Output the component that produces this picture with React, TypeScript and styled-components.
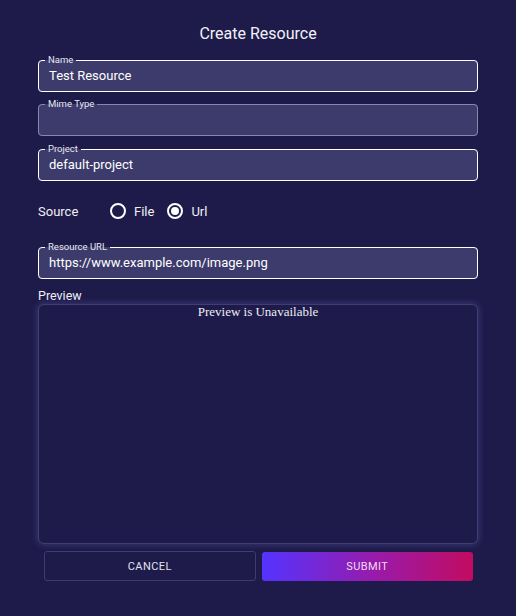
import React, { useState } from "react";
import styled, { createGlobalStyle } from "styled-components";

const Global = createGlobalStyle`
  html, body { margin: 0; padding: 0; background: #1e1b4a; }
  body { font-family: Roboto, "Liberation Sans", sans-serif; color: #fff; }
  * { box-sizing: border-box; }
`;

const Page = styled.div`
  width: 516px;
  height: 616px;
  background: #1e1b4a;
  padding: 0 38px;
  display: flex;
  flex-direction: column;
`;

const Title = styled.h1`
  margin: 0;
  padding-top: 24px;
  height: 55px;
  text-align: center;
  font-size: 16px;
  font-weight: 400;
  line-height: 19px;
  color: #f2f2f6;
`;

const Field = styled.fieldset<{ $active?: boolean; $mt?: number }>`
  margin: ${(p) => p.$mt ?? 0}px 0 0 0;
  padding: 0 10px 0 6px;
  border: 1px solid ${(p) => (p.$active ? "#ffffff" : "#8a87ad")};
  border-radius: 4px;
  background: #3d3b6c;
  min-width: 0;
`;

const Legend = styled.legend`
  padding: 0 3px;
  font-size: 9.5px;
  line-height: 10px;
  color: #e8e8f0;
`;

const Input = styled.input`
  display: block;
  width: 100%;
  height: 26px;
  padding: 0 0 6px 4px;
  margin: 0;
  border: none;
  outline: none;
  background: transparent;
  color: #ffffff;
  font-family: Roboto, "Liberation Sans", sans-serif;
  font-size: 13px;
`;

const SourceRow = styled.div`
  display: flex;
  align-items: center;
  height: 24px;
  margin-top: 18px;
  font-size: 13px;
  color: #f0f0f5;
`;

const SourceLabel = styled.span`
  width: 72px;
`;

const RadioOption = styled.label`
  display: flex;
  align-items: center;
  gap: 8px;
  margin-right: 13px;
  cursor: pointer;
`;

const RadioCircle = styled.span<{ $checked?: boolean }>`
  width: 16px;
  height: 16px;
  border-radius: 50%;
  border: 2px solid #ffffff;
  display: flex;
  align-items: center;
  justify-content: center;
  &::after {
    content: "";
    width: 8px;
    height: 8px;
    border-radius: 50%;
    background: #ffffff;
    display: ${(p) => (p.$checked ? "block" : "none")};
  }
`;

const PreviewLabel = styled.div`
  margin-top: 9px;
  font-size: 12.5px;
  line-height: 16px;
  color: #f0f0f5;
`;

const PreviewBox = styled.div`
  margin-top: 0;
  height: 240px;
  border: 1px solid #403d74;
  border-radius: 6px;
  box-shadow: 0 0 6px 1px rgba(80, 76, 150, 0.55);
  background: #1e1b4a;
  text-align: center;
  font-family: "Liberation Serif", serif;
  font-size: 13px;
  line-height: 14px;
  color: #eeeef4;
`;

const Buttons = styled.div`
  display: grid;
  grid-template-columns: 1fr 1fr;
  gap: 6px;
  padding: 0 5px 0 6px;
  margin-top: 7px;
`;

const Button = styled.button<{ $primary?: boolean }>`
  border-radius: 3px;
  font-family: Roboto, "Liberation Sans", sans-serif;
  font-size: 11px;
  letter-spacing: 0.4px;
  text-transform: uppercase;
  cursor: pointer;
  color: ${(p) => (p.$primary ? "#f0dcf2" : "#e2e2ea")};
  border: ${(p) => (p.$primary ? "none" : "1px solid #3f3c6f")};
  background: ${(p) =>
    p.$primary ? "linear-gradient(90deg, #5434ff 0%, #9a1aa8 55%, #c20c60 100%)" : "transparent"};
  margin-top: ${(p) => (p.$primary ? "1px" : "0")};
  height: ${(p) => (p.$primary ? "29px" : "30px")};
`;

export default function App() {
  const [source, setSource] = useState<"file" | "url">("url");
  return (
    <>
      <Global />
      <Page>
        <Title>Create Resource</Title>
        <Field $active>
          <Legend>Name</Legend>
          <Input defaultValue="Test Resource" />
        </Field>
        <Field $mt={7}>
          <Legend>Mime Type</Legend>
          <Input defaultValue="" />
        </Field>
        <Field $active $mt={8}>
          <Legend>Project</Legend>
          <Input defaultValue="default-project" />
        </Field>
        <SourceRow>
          <SourceLabel>Source</SourceLabel>
          <RadioOption onClick={() => setSource("file")}>
            <RadioCircle $checked={source === "file"} />
            File
          </RadioOption>
          <RadioOption onClick={() => setSource("url")}>
            <RadioCircle $checked={source === "url"} />
            Url
          </RadioOption>
        </SourceRow>
        <Field $active $mt={19}>
          <Legend>Resource URL</Legend>
          <Input defaultValue="https://www.example.com/image.png" />
        </Field>
        <PreviewLabel>Preview</PreviewLabel>
        <PreviewBox>Preview is Unavailable</PreviewBox>
        <Buttons>
          <Button>Cancel</Button>
          <Button $primary>Submit</Button>
        </Buttons>
      </Page>
    </>
  );
}
